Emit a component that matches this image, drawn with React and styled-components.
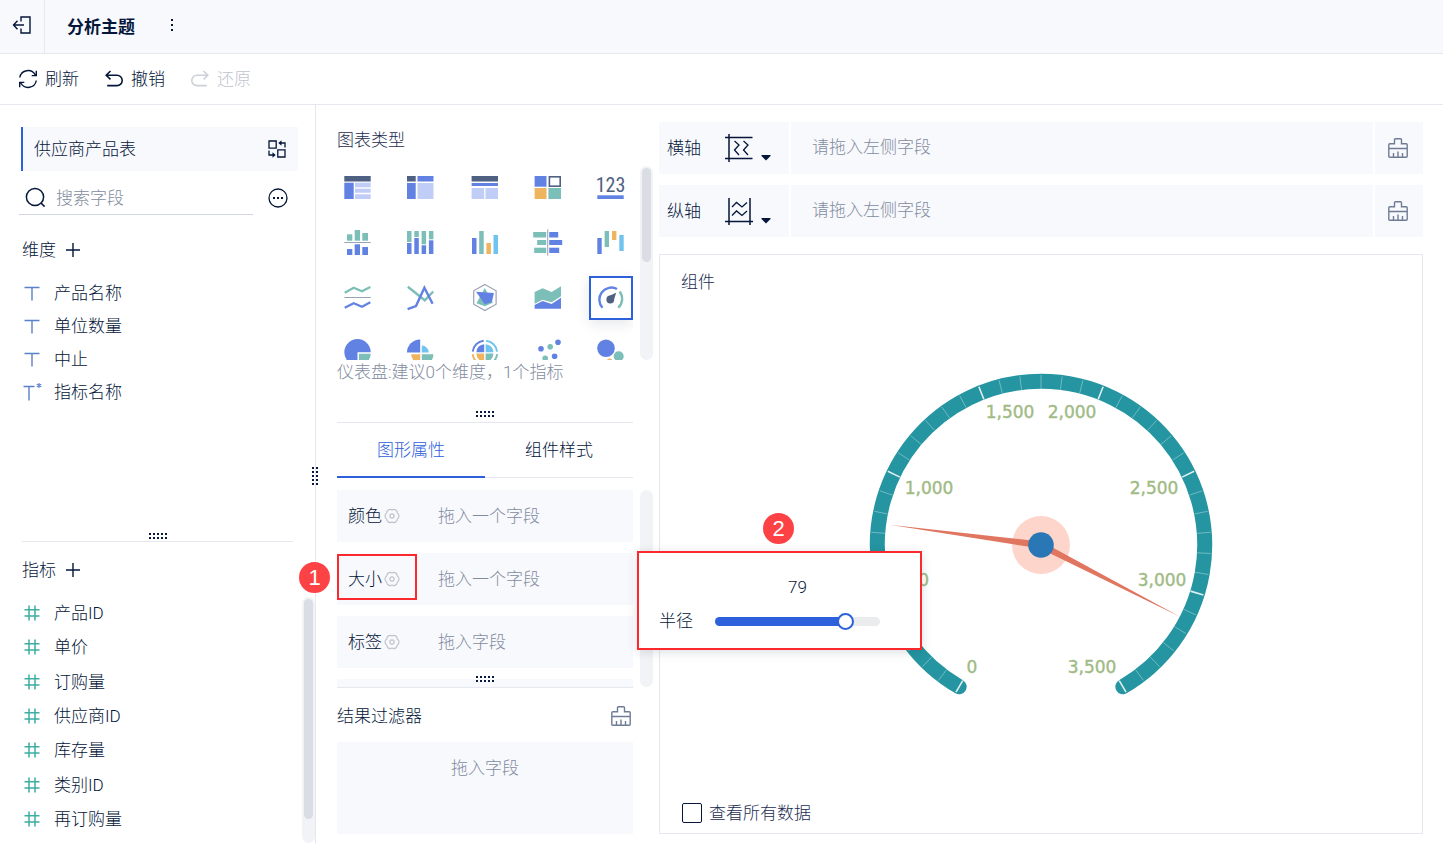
import React, { useState } from "react";
import styled, { createGlobalStyle, css } from "styled-components";

const c = {
  ink: "#04163a",
  soft: "#1c2c4f",
  muted: "#828c9f",
  faint: "#bfc4cd",
  line: "#e6e8f0",
  panel: "#f8f9fd",
  blue: "#2d60db",
  red: "#fb292d",
  teal: "#2495a1",
};

const chart = {
  dark: "#4f6182",
  blue: "#6282e3",
  pale: "#c0cdf6",
  green: "#7cbeb8",
  orange: "#eeb45e",
  sky: "#70c3ef",
  grey: "#9aa2b5",
};

const GlobalStyle = createGlobalStyle`
  *, *::before, *::after { box-sizing: border-box; }
  body { margin: 0; background: #fff; }
  body, button, input {
    font-family: Roboto, "Noto Sans CJK SC", sans-serif;
    font-size: 17px;
    font-weight: 300;
    line-height: 24px;
    color: ${c.ink};
  }
  button { padding: 0; border: 0; background: none; cursor: pointer; }
  svg { display: block; flex: none; }
`;

/* ---------- frame ---------- */

const Page = styled.div`
  display: flex;
  flex-direction: column;
  min-height: 100vh;
`;

const Header = styled.header`
  display: flex;
  align-items: center;
  height: 54px;
  background: ${c.panel};
  border-bottom: 1px solid ${c.line};
`;

const BackButton = styled.button`
  display: flex;
  align-items: center;
  justify-content: center;
  width: 45px;
  height: 53px;
  padding-bottom: 3px;
  border-right: 1px solid ${c.line};
`;

const Title = styled.h1`
  margin: 0 34px 0 22px;
  font-size: 17px;
  font-weight: 700;
`;

const MoreButton = styled.button`
  padding-bottom: 3px;
`;

const Toolbar = styled.div`
  display: flex;
  align-items: center;
  gap: 25px;
  height: 51px;
  padding-left: 18px;
  border-bottom: 1px solid ${c.line};
`;

const ToolButton = styled.button`
  display: flex;
  align-items: center;
  gap: 7px;
  color: ${c.ink};
  &:disabled { color: ${c.faint}; }
`;

const Body = styled.main`
  display: flex;
  flex: 1;
`;

/* ---------- shared parts ---------- */

const Handle = styled.span`
  position: absolute;
  ${(p) =>
    p.$vertical
      ? css`top: 362px; right: -3px; width: 6px; height: 18px;`
      : css`bottom: ${p.$low ? 2 : 5}px; left: 50%; margin-left: -9px; width: 18px; height: 6px;`}
  background: radial-gradient(circle at 1px 1px, ${c.ink} 0.7px, transparent 1.3px) 0 0 / 4px 4px;
`;

const ScrollTrack = styled.div`
  flex: none;
  width: 13px;
  padding: 2px;
  border-radius: 7px;
  background: #f2f3f6;
`;

const ScrollThumb = styled.div`
  height: ${(p) => p.$size};
  border-radius: 5px;
  background: #dadde3;
`;

const Badge = styled.span`
  position: absolute;
  display: flex;
  align-items: center;
  justify-content: center;
  width: 31px;
  height: 31px;
  border-radius: 50%;
  background: #fd4245;
  color: #fff;
  font-family: "Liberation Sans", sans-serif;
  font-size: 22px;
  font-weight: 400;
  z-index: 3;
`;

/* ---------- fields column ---------- */

const FieldsColumn = styled.aside`
  position: relative;
  display: flex;
  flex-direction: column;
  flex: 0 0 316px;
  padding-top: 22px;
  border-right: 1px solid ${c.line};
`;

const Dataset = styled.div`
  display: flex;
  align-items: center;
  justify-content: space-between;
  height: 44px;
  margin: 0 17px 0 21px;
  padding: 0 11px;
  background: ${c.panel};
  border-left: 2px solid ${c.blue};
`;

const SearchRow = styled.div`
  display: flex;
  align-items: center;
  gap: 15px;
  margin: 10px 27px 0 19px;
`;

const SearchBox = styled.label`
  display: flex;
  align-items: center;
  gap: 10px;
  flex: 1;
  height: 34px;
  padding-left: 6px;
  border-bottom: 1px solid #d3d7df;
  input {
    width: 100%;
    padding: 0;
    border: 0;
    outline: 0;
    background: none;
  }
  input::placeholder { color: ${c.muted}; opacity: 1; }
`;

const DimensionPane = styled.section`
  position: relative;
  flex: 1;
  margin: 23px 22px 0 22px;
  border-bottom: 1px solid ${c.line};
`;

const MetricPane = styled.section`
  display: flex;
  flex-direction: column;
  flex: 0 0 301px;
  padding-top: 16px;
`;

const PaneTitle = styled.h2`
  display: flex;
  align-items: center;
  gap: 10px;
  margin: 0;
  padding-left: ${(p) => (p.$inset ? "22px" : 0)};
  font-size: 17px;
  font-weight: 300;
`;

const FieldList = styled.ul`
  display: flex;
  flex-direction: column;
  flex: 1;
  margin: 0;
  padding: 0;
  list-style: none;
`;

const DimensionList = styled(FieldList)`
  margin-top: 15px;
`;

const MetricScroll = styled.div`
  display: flex;
  flex: 1;
  margin-top: 15px;
`;

const MetricList = styled(FieldList)`
  padding: 0 0 6px 22px;
`;

const Field = styled.li`
  display: flex;
  align-items: center;
  gap: 12px;
  flex: ${(p) => (p.$fill ? "1" : "0 0 33px")};
  padding-bottom: 2px;
`;

/* ---------- settings column ---------- */

const SettingsColumn = styled.section`
  display: flex;
  flex-direction: column;
  flex: 0 0 337px;
  padding: 0 0 9px 21px;
`;

const ChartTypes = styled.section`
  position: relative;
  flex: 0 0 318px;
  width: 296px;
  padding-top: 23px;
  border-bottom: 1px solid ${c.line};
`;

const Heading = styled.h2`
  margin: 0;
  font-size: 17px;
  font-weight: 300;
  color: ${(p) => (p.$soft ? c.soft : c.ink)};
`;

const TypeScroll = styled.div`
  display: flex;
  gap: 7px;
  width: 317px;
  height: 194px;
  margin: 14px 0 0 -1px;
`;

const TypeGrid = styled.div`
  display: grid;
  grid-template-columns: repeat(5, 44px);
  justify-content: space-between;
  row-gap: 11px;
  flex: 1;
  overflow: hidden;
`;

const TypeButton = styled.button`
  display: block;
  width: 44px;
  height: 44px;
  ${(p) =>
    p.$selected &&
    css`
      box-shadow: inset 0 0 0 2px ${c.blue}, 0 4px 14px rgba(20, 30, 60, 0.1);
    `}
`;

const Hint = styled.p`
  margin: 0;
  color: ${c.muted};
  white-space: nowrap;
`;

const Properties = styled.section`
  position: relative;
  display: flex;
  flex-direction: column;
  flex: 0 0 265px;
  width: 296px;
  border-bottom: 1px solid ${c.line};
`;

const Tabs = styled.div`
  display: flex;
  height: 55px;
  border-bottom: 1px solid ${c.line};
`;

const Tab = styled.button`
  flex: 1;
  height: 55px;
  color: ${(p) => (p.$active ? c.blue : c.ink)};
  border-bottom: 2px solid ${(p) => (p.$active ? c.blue : "transparent")};
`;

const PropScroll = styled.div`
  display: flex;
  gap: 7px;
  width: 316px;
  height: 197px;
  margin-top: 12px;
  overflow: hidden;
`;

const PropList = styled.div`
  display: flex;
  flex-direction: column;
  gap: 11px;
  flex: 1;
`;

const PropRow = styled.div`
  display: flex;
  align-items: center;
  flex: 0 0 52px;
  background: ${c.panel};
`;

const PropLabel = styled.div`
  display: flex;
  align-items: center;
  gap: 2px;
  width: 80px;
  height: 46px;
  margin-bottom: 4px;
  padding: 4px 0 0 9px;
  border: 2px solid ${(p) => (p.$marked ? c.red : "transparent")};
`;

const DropText = styled.span`
  color: ${c.muted};
  padding-left: ${(p) => p.$indent || 0}px;
`;

const Popup = styled.div`
  position: absolute;
  top: 128px;
  left: 300px;
  width: 285px;
  height: 99px;
  padding: 22px 40px 0 20px;
  background: #fff;
  border: 2px solid ${c.red};
  box-shadow: 0 2px 10px rgba(20, 30, 60, 0.14);
  z-index: 2;
`;

const SliderLine = styled.div`
  display: flex;
  align-items: center;
  gap: 22px;
  margin-top: 10px;
`;

const SliderValue = styled.output`
  display: block;
  margin-left: 56px;
  text-align: center;
`;

const SliderTrack = styled.div`
  position: relative;
  flex: 1;
  height: 9px;
  border-radius: 5px;
  background: #ebecee;
`;

const SliderFill = styled.div`
  height: 9px;
  border-radius: 5px;
  background: ${c.blue};
`;

const Range = styled.input`
  position: absolute;
  top: -4px;
  left: -8px;
  width: calc(100% + 16px);
  height: 17px;
  margin: 0;
  appearance: none;
  background: none;
  &::-webkit-slider-thumb {
    appearance: none;
    width: 17px;
    height: 17px;
    border: 2px solid ${c.blue};
    border-radius: 50%;
    background: #fff;
  }
`;

const MarkOne = styled(Badge)`
  top: 139px;
  left: -38px;
`;

const MarkTwo = styled(Badge)`
  top: 90px;
  left: 426px;
`;

const FilterHead = styled.div`
  display: flex;
  align-items: center;
  justify-content: space-between;
  width: 296px;
  height: 54px;
  padding-top: 2px;
`;

const ClearButton = styled.button`
  margin-right: 2px;
`;

const FilterDrop = styled.div`
  flex: 1;
  width: 296px;
  padding-top: 14px;
  background: ${c.panel};
  text-align: center;
`;

/* ---------- canvas column ---------- */

const CanvasColumn = styled.section`
  display: flex;
  flex-direction: column;
  flex: 1;
  min-width: 0;
  padding: 17px 20px 9px 6px;
`;

const AxisRow = styled.div`
  display: flex;
  gap: 2px;
  height: 52px;
  margin-bottom: 11px;
`;

const AxisLabel = styled.div`
  display: flex;
  align-items: center;
  flex: 0 0 130px;
  padding-left: 8px;
  background: ${c.panel};
`;

const AxisPicker = styled.button`
  display: flex;
  align-items: center;
  gap: 8px;
  margin-left: 24px;
`;

const AxisField = styled.div`
  display: flex;
  align-items: center;
  flex: 1;
  padding: 0 0 2px 21px;
  background: ${c.panel};
`;

const AxisClear = styled.button`
  display: flex;
  align-items: center;
  justify-content: center;
  flex: 0 0 48px;
  padding-right: 2px;
  background: ${c.panel};
`;

const Card = styled.section`
  display: flex;
  flex-direction: column;
  flex: 1;
  margin-top: 6px;
  padding: 15px 21px 8px;
  border: 1px solid ${c.line};
`;

const ChartArea = styled.div`
  display: flex;
  align-items: center;
  justify-content: center;
  flex: 1;
  padding-bottom: 6px;
`;

const GaugeLabel = styled.text`
  font-family: "DejaVu Sans", sans-serif;
  font-size: 17px;
  font-weight: 400;
  fill: #a0bb85;
  stroke: #a0bb85;
  stroke-width: 0.4px;
`;

const AllData = styled.label`
  display: flex;
  align-items: center;
  gap: 7px;
  padding-left: 1px;
  color: ${c.soft};
  input {
    appearance: none;
    width: 20px;
    height: 20px;
    margin: 0;
    border: 1px solid ${c.ink};
    border-radius: 2px;
    background: #fff;
  }
`;

/* ---------- line icons ---------- */

const Line = ({ w = 20, h = 20, sw = 1.4, color = c.ink, children }) => (
  <svg width={w} height={h} viewBox={`0 0 ${w} ${h}`} fill="none" stroke={color} strokeWidth={sw}>
    {children}
  </svg>
);

const BackIcon = () => (
  <Line>
    <path d="M9 6.5V2h9v16H9v-4.5M1.5 10H12M5.500 5.800 1.500 10l4 4.200" />
  </Line>
);

const MoreVertical = () => (
  <svg width="6" height="14" viewBox="0 0 6 14" fill={c.ink}>
    <path d="M2 1h2v2H2zM2 6h2v2H2zM2 11h2v2H2z" />
  </svg>
);

const RefreshIcon = () => (
  <Line>
    <path d="M1.800 8.500A8.300 8.300 0 0 1 17.300 6M18.300 11.500A8.300 8.300 0 0 1 2.800 14M18.300 1.800V6.600H13.700M1.700 18.200v-4.800h4.600" />
  </Line>
);

const UndoIcon = ({ flip, color }) => (
  <Line sw={1.6} color={color}>
    <path
      transform={flip ? "translate(20 0) scale(-1 1)" : undefined}
      d="M6.500 2 2.200 6.200l4.300 4.200M2.200 6.200H13a5.200 5.200 0 0 1 0 10.400H3.200"
    />
  </Line>
);

const SwapIcon = () => (
  <Line sw={1.3}>
    <path d="M2 2h7.200v7.200H2zM10.800 10.800H18V18h-7.200zM18 8.500V4h-4M2 11.500V16h4" />
    <path d="M11.300 4l3.200-2.700v5.400zM8.700 16l-3.200-2.700v5.400z" fill={c.ink} stroke="none" />
  </Line>
);

const SearchIcon = () => (
  <Line w={21} h={21} sw={1.5}>
    <circle cx="10" cy="10" r="8.600" />
    <path d="m16 16 3.600 3.600" />
  </Line>
);

const MoreCircle = () => (
  <Line sw={1.3}>
    <circle cx="10" cy="10" r="9" />
    <path d="M5 10h2M9 10h2M13 10h2" strokeWidth="1.800" />
  </Line>
);

const PlusIcon = () => (
  <Line w={14} h={14}>
    <path d="M7 0v14M0 7h14" />
  </Line>
);

const TextFieldIcon = ({ star }) => (
  <Line h={18} color="#5a80cc">
    <path d={star ? "M1.500 3.500h11M7 3.500v14" : "M2.500 3.500h15M10 3.500v13"} />
    {star && <path d="M17 0v5M14.800 1.200l4.400 2.600M14.800 3.800l4.400-2.600" strokeWidth="1.100" />}
  </Line>
);

const NumberFieldIcon = () => (
  <Line h={18} sw={1.5} color="#3fada2">
    <path d="M2.500 5.800h15M2.500 12h15M7 1.500v15M13 1.500v15" />
  </Line>
);

const GearIcon = () => (
  <Line w={16} h={16} sw={1.2} color={c.faint}>
    <path
      strokeLinejoin="round"
      d="M8 1.900A3.500 3.500 0 0 1 13.300 5A3.500 3.500 0 0 1 13.300 11A3.500 3.500 0 0 1 8 14.100A3.500 3.500 0 0 1 2.700 11A3.500 3.500 0 0 1 2.700 5A3.500 3.500 0 0 1 8 1.900z"
    />
    <circle cx="8" cy="8" r="2.100" />
  </Line>
);

const BrushIcon = () => (
  <Line color="#6f7c95">
    <path d="M.8 18.200V6.800q0-1 1-1h4.700V1.700q0-1 1-1h5q1 0 1 1v4.100h4.700q1 0 1 1v11.400q0 1-1 1H1.800q-1 0-1-1zM.8 10.500h18.400M5.500 19v-4M10 19v-5.500M14.500 19v-4" />
  </Line>
);

const AxisXIcon = () => (
  <Line w={28} h={30} sw={1.5}>
    <path d="M4 1v28M0 4.500h27.500M0 25.500h27.500" />
    <path d="m9.500 8 4.500 4-4.500 5 4.500 5M18.500 8l4.500 4-4.500 5 4.500 5" strokeWidth="1.300" />
  </Line>
);

const AxisYIcon = () => (
  <Line w={28} h={30} sw={1.5}>
    <path d="M4 2v27M25 2v27M0 25.500h28.500" />
    <path d="m7 11 4.500-4.500L17 11l5-4.500M7 19.500l4.500-4.500 5.500 4.500 5-4.500" strokeWidth="1.300" />
  </Line>
);

const Caret = () => (
  <svg width="10" height="30" viewBox="0 0 10 30" fill={c.ink}>
    <path d="M.5 22h9v1L5 27.500.5 23z" />
  </svg>
);

/* ---------- chart type icons, drawn on a 44 × 44 cell ---------- */

const Bars = ({ items }) =>
  items.map(([fill, x1, y1, x2, y2], i) => (
    <rect key={i} x={x1} y={y1} width={x2 - x1} height={y2 - y1} fill={chart[fill]} />
  ));

const typeIcons = [
  {
    name: "分组表",
    art: <Bars items={[["dark", 8.3, 10, 34.7, 15.5], ["blue", 8.3, 16.7, 17.7, 33], ["pale", 19, 16.7, 34.7, 21.3], ["pale", 19, 22.7, 34.7, 26.7], ["pale", 19, 28.3, 34.7, 33]]} />,
  },
  {
    name: "交叉表",
    art: <Bars items={[["dark", 8, 10, 16.7, 15.5], ["blue", 18.5, 10, 34.5, 15.5], ["blue", 8, 17, 16.7, 33], ["pale", 18.5, 17, 34.5, 33]]} />,
  },
  {
    name: "明细表",
    art: <Bars items={[["dark", 8.6, 10, 35, 15.5], ["blue", 8.6, 17, 35, 20], ["pale", 8.6, 22, 21.2, 33], ["pale", 22.5, 22, 35, 33]]} />,
  },
  {
    name: "颜色表格",
    art: (
      <>
        <Bars items={[["blue", 8.6, 10, 20.5, 20.7], ["orange", 8.6, 22, 20.5, 33], ["green", 22.4, 22, 35, 33]]} />
        <rect x="23.4" y="10.8" width="10.8" height="9.4" fill="none" stroke={chart.dark} strokeWidth="1.6" />
      </>
    ),
  },
  {
    name: "指标卡",
    art: (
      <>
        <text x="21.5" y="25.7" textAnchor="middle" fontFamily="'Liberation Sans Narrow', 'Roboto Condensed', sans-serif" fontSize="20" fontWeight="400" fill={chart.dark}>123</text>
        <Bars items={[["blue", 8.3, 29.3, 34.7, 33]]} />
      </>
    ),
  },
  {
    name: "对比柱状图",
    art: <Bars items={[["green", 11, 13.3, 16.3, 19.7], ["green", 18.7, 9, 24, 19.7], ["green", 26.3, 12, 32, 19.7], ["grey", 8.3, 21, 34.7, 22], ["blue", 11, 28, 16.3, 34], ["blue", 18.7, 23.3, 24, 34], ["blue", 26.3, 26, 32, 34]]} />,
  },
  {
    name: "堆积柱状图",
    art: <Bars items={[["green", 8, 10, 12.5, 21], ["green", 15.3, 10, 19.8, 16], ["green", 22.6, 10, 27.1, 23.3], ["green", 29.9, 10, 34.4, 18.3], ["blue", 8, 22, 12.5, 33], ["blue", 15.3, 17, 19.8, 33], ["blue", 22.6, 24.3, 27.1, 33], ["blue", 29.9, 19.3, 34.4, 33]]} />,
  },
  {
    name: "分区柱形图",
    art: <Bars items={[["blue", 9, 17, 13.5, 33], ["green", 16.2, 10, 20.7, 33], ["orange", 23.4, 22, 27.9, 33], ["sky", 30.5, 14, 35, 33]]} />,
  },
  {
    name: "对比条形图",
    art: <Bars items={[["green", 7.2, 11, 20.2, 16.5], ["green", 11.2, 19, 20.2, 24], ["green", 8.2, 26.7, 20.2, 32], ["grey", 21.2, 8.3, 22.2, 34.7], ["blue", 23.2, 11, 32.2, 16.5], ["blue", 23.2, 19, 36.2, 24], ["blue", 23.2, 26.7, 33.2, 32]]} />,
  },
  {
    name: "瀑布图",
    art: <Bars items={[["blue", 8.3, 17, 12.7, 33], ["green", 15.6, 10, 20, 26], ["orange", 23, 10, 27.4, 19], ["sky", 30.3, 14, 34.7, 30]]} />,
  },
  {
    name: "折线图",
    art: (
      <g fill="none" strokeWidth="2.2">
        <path d="m8.700 16.700 9-5 8.300 3.600 8.300-4.300" stroke={chart.green} />
        <path d="M8.300 21.500h26.400" stroke={chart.grey} strokeWidth="1" />
        <path d="m8.700 31.700 9-4.400 8.300 3.400 8.300-4.400" stroke={chart.blue} />
      </g>
    ),
  },
  {
    name: "范围面积图",
    art: (
      <g fill="none" strokeWidth="2.4">
        <path d="m8.800 10.800 17 13.500 8.400-8.800" stroke={chart.green} />
        <path d="m8.600 33.200 8.400-3.200 8.400-18.300 8.200 16" stroke={chart.blue} />
      </g>
    ),
  },
  {
    name: "雷达图",
    art: (
      <>
        <path d="m21.900 8.500 11.200 6.300v13.400l-11.200 6.300-11.200-6.300V14.800z" fill="none" stroke={chart.grey} strokeWidth="1.2" />
        <path d="m21.800 12 8 14.700-8 3.600-8.300-3z" fill={chart.green} />
        <path d="m13 15.700 17.900 1.200-2 9-7.100 2.300z" fill={chart.blue} />
      </>
    ),
  },
  {
    name: "面积图",
    art: (
      <>
        <path d="m8.600 16 8-3.700 9 3.700L35 10.300v10l-9.400 6-9-2.600-8 4z" fill={chart.green} />
        <path d="m8.600 29 8-4 9 3 9.400-6.300v11H8.600z" fill={chart.blue} />
      </>
    ),
  },
  {
    name: "仪表盘",
    selected: true,
    art: (
      <>
        <g fill="none" strokeWidth="2.4">
          <path d="M13.500 31.700A12 12 0 0 1 28 13" stroke={chart.blue} />
          <path d="M30.600 15.400a12 12 0 0 1-1.400 16.300" stroke={chart.green} />
        </g>
        <circle cx="21.3" cy="23.500" r="3.900" fill={chart.dark} />
        <path d="m19.500 20.300 7.700-3.600-2.600 8z" fill={chart.dark} />
      </>
    ),
  },
  {
    name: "饼图",
    art: (
      <>
        <path d="M21.500 21.300v13.200A13.200 13.200 0 1 1 34.700 21.300z" fill={chart.blue} />
        <path d="M23 22.800h11.700A12 12 0 0 1 23 34.500z" fill={chart.green} />
      </>
    ),
  },
  {
    name: "玫瑰图",
    art: (
      <>
        <path d="M21.200 21.600H8A13 13 0 0 1 21.200 8.400z" fill={chart.blue} />
        <path d="M22.800 21.600v-7a7 7 0 0 1 7 7z" fill={chart.sky} />
        <path d="M21.200 23.300h-9a9 9 0 0 0 9 9z" fill={chart.orange} />
        <path d="M22.800 23.300h11.600a11.600 11.600 0 0 1-11.600 11.600z" fill={chart.green} />
      </>
    ),
  },
  {
    name: "多层饼图",
    art: (
      <>
        <path d="M21.200 21.200h-7.800a8 8 0 0 1 7.800-8z" fill={chart.blue} />
        <path d="M22.600 21.200v-8a8 8 0 0 1 7.800 8z" fill={chart.sky} />
        <path d="M21.200 22.600h-7.800a8 8 0 0 0 7.800 8z" fill={chart.orange} />
        <path d="M22.600 22.600v8a8 8 0 0 0 7.800-8z" fill={chart.green} />
        <g fill="none" strokeWidth="1.9">
          <path d="M9.700 20.700A12.200 12.200 0 0 1 20.700 9.700" stroke={chart.blue} />
          <path d="M23.100 9.700a12.200 12.200 0 0 1 11 11" stroke={chart.sky} />
          <path d="M9.700 23.100a12.200 12.200 0 0 0 11 11" stroke={chart.orange} />
          <path d="M23.100 34.100a12.200 12.200 0 0 0 11-11" stroke={chart.green} />
        </g>
      </>
    ),
  },
  {
    name: "散点图",
    art: (
      <>
        <g fill={chart.blue}>
          <circle cx="15" cy="17.700" r="2.800" />
          <circle cx="32" cy="11.300" r="2.800" />
          <circle cx="28.600" cy="25.300" r="2.800" />
        </g>
        <g fill={chart.green}>
          <circle cx="24.200" cy="15.800" r="2.800" />
          <circle cx="19.200" cy="27.300" r="2.800" />
        </g>
      </>
    ),
  },
  {
    name: "气泡图",
    art: (
      <>
        <circle cx="17" cy="17.200" r="8.800" fill={chart.blue} />
        <circle cx="29.700" cy="25.200" r="5" fill={chart.green} />
        <circle cx="20.700" cy="30.500" r="3" fill={chart.orange} />
      </>
    ),
  },
];

/* ---------- gauge ---------- */

const polar = (angle, r) => {
  const a = (angle * Math.PI) / 180;
  return [180 + r * Math.sin(a), 180 - r * Math.cos(a)];
};

const gaugeLabels = [
  ["0", 111, 308, "middle"],
  ["500", 68, 221, "end"],
  ["1,000", 68, 129, "middle"],
  ["1,500", 149, 53, "middle"],
  ["2,000", 211, 53, "middle"],
  ["2,500", 293, 129, "middle"],
  ["3,000", 301, 221, "middle"],
  ["3,500", 231, 308, "middle"],
];

function Gauge() {
  const [sx, sy] = polar(-150, 163.7);
  const [ex, ey] = polar(150, 163.7);
  const ticks = Array.from({ length: 43 }, (_, i) => {
    const angle = -150 + (i * 300) / 42;
    const major = i % 6 === 0;
    const [x1, y1] = polar(angle, 156.5);
    const [x2, y2] = polar(angle, 170);
    return <line key={i} x1={x1} y1={y1} x2={x2} y2={y2} strokeWidth={major ? 1.6 : 1} opacity={major ? 0.85 : 0.35} />;
  });
  return (
    <svg width="360" height="360" viewBox="0 0 360 360" role="img" aria-label="仪表盘">
      <path d={`M${sx} ${sy}A163.7 163.7 0 1 1 ${ex} ${ey}`} fill="none" stroke={c.teal} strokeWidth="15" strokeLinecap="round" />
      <g stroke="#fff">{ticks}</g>
      <circle cx="180" cy="180" r="29" fill="#fed5cb" />
      <path d="M28.500 159.700 180.500 176.500l-1 7z" fill="#e07560" />
      <path d="m319.500 252-141-68.700 3-6.300z" fill="#e07560" />
      <circle cx="180" cy="180" r="12.800" fill="#2a77b6" />
      {gaugeLabels.map(([t, x, y, anchor]) => (
        <GaugeLabel key={t} x={x} y={y} textAnchor={anchor}>{t}</GaugeLabel>
      ))}
    </svg>
  );
}

/* ---------- page ---------- */

const dimensions = ["产品名称", "单位数量", "中止", "指标名称"];
const metrics = ["产品ID", "单价", "订购量", "供应商ID", "库存量", "类别ID", "再订购量"];
const hint = "仪表盘:建议0个维度\uff0c1个指标";
const properties = [
  ["颜色", "拖入一个字段"],
  ["大小", "拖入一个字段"],
  ["标签", "拖入字段"],
];
const axes = [
  ["横轴", AxisXIcon],
  ["纵轴", AxisYIcon],
];

export default function App() {
  const [radius, setRadius] = useState(79);
  return (
    <Page lang="zh-CN">
      <GlobalStyle />
      <Header>
        <BackButton aria-label="返回"><BackIcon /></BackButton>
        <Title>分析主题</Title>
        <MoreButton aria-label="更多"><MoreVertical /></MoreButton>
      </Header>
      <Toolbar>
        <ToolButton><RefreshIcon />刷新</ToolButton>
        <ToolButton><UndoIcon />撤销</ToolButton>
        <ToolButton disabled><UndoIcon flip color="#ccd0d8" />还原</ToolButton>
      </Toolbar>
      <Body>
        <FieldsColumn>
          <Dataset>
            供应商产品表
            <button aria-label="切换数据表"><SwapIcon /></button>
          </Dataset>
          <SearchRow>
            <SearchBox>
              <SearchIcon />
              <input type="text" placeholder="搜索字段" aria-label="搜索字段" />
            </SearchBox>
            <button aria-label="更多操作"><MoreCircle /></button>
          </SearchRow>
          <DimensionPane>
            <PaneTitle>维度<button aria-label="添加维度"><PlusIcon /></button></PaneTitle>
            <DimensionList>
              {dimensions.map((name, i) => (
                <Field key={name}><TextFieldIcon star={i === 3} />{name}</Field>
              ))}
            </DimensionList>
            <Handle $low />
          </DimensionPane>
          <MetricPane>
            <PaneTitle $inset>指标<button aria-label="添加指标"><PlusIcon /></button></PaneTitle>
            <MetricScroll>
              <MetricList>
                {metrics.map((name) => (
                  <Field key={name} $fill><NumberFieldIcon />{name}</Field>
                ))}
              </MetricList>
              <ScrollTrack><ScrollThumb $size="91%" /></ScrollTrack>
            </MetricScroll>
          </MetricPane>
          <Handle $vertical />
        </FieldsColumn>

        <SettingsColumn>
          <ChartTypes>
            <Heading $soft>图表类型</Heading>
            <TypeScroll>
              <TypeGrid>
                {typeIcons.map(({ name, art, selected }) => (
                  <TypeButton key={name} aria-label={name} aria-pressed={!!selected} $selected={selected}>
                    <svg width="44" height="44" viewBox="0 0 44 44">{art}</svg>
                  </TypeButton>
                ))}
              </TypeGrid>
              <ScrollTrack><ScrollThumb $size="94px" /></ScrollTrack>
            </TypeScroll>
            <Hint>{hint}</Hint>
            <Handle />
          </ChartTypes>

          <Properties>
            <Tabs role="tablist">
              <Tab role="tab" aria-selected="true" $active>图形属性</Tab>
              <Tab role="tab" aria-selected="false">组件样式</Tab>
            </Tabs>
            <PropScroll>
              <PropList>
                {properties.map(([label, text]) => (
                  <PropRow key={label}>
                    <PropLabel $marked={label === "大小"}>
                      {label}
                      <button aria-label={`${label}设置`}><GearIcon /></button>
                    </PropLabel>
                    <DropText $indent={21}>{text}</DropText>
                  </PropRow>
                ))}
                <PropRow />
              </PropList>
              <ScrollTrack />
            </PropScroll>
            <Handle />
            <MarkOne>1</MarkOne>
            <MarkTwo>2</MarkTwo>
            <Popup>
              <SliderValue htmlFor="radius">{radius}</SliderValue>
              <SliderLine>
                <label htmlFor="radius">半径</label>
                <SliderTrack>
                  <SliderFill style={{ width: `${radius}%` }} />
                  <Range id="radius" type="range" min="0" max="100" value={radius} onChange={(e) => setRadius(Number(e.target.value))} />
                </SliderTrack>
              </SliderLine>
            </Popup>
          </Properties>

          <FilterHead>
            <Heading>结果过滤器</Heading>
            <ClearButton aria-label="清空过滤器"><BrushIcon /></ClearButton>
          </FilterHead>
          <FilterDrop><DropText>拖入字段</DropText></FilterDrop>
        </SettingsColumn>

        <CanvasColumn>
          {axes.map(([label, Icon]) => (
            <AxisRow key={label}>
              <AxisLabel>
                {label}
                <AxisPicker aria-label={`${label}类型`}><Icon /><Caret /></AxisPicker>
              </AxisLabel>
              <AxisField><DropText>请拖入左侧字段</DropText></AxisField>
              <AxisClear aria-label={`清空${label}`}><BrushIcon /></AxisClear>
            </AxisRow>
          ))}
          <Card>
            <Heading $soft>组件</Heading>
            <ChartArea><Gauge /></ChartArea>
            <AllData><input type="checkbox" />查看所有数据</AllData>
          </Card>
        </CanvasColumn>
      </Body>
    </Page>
  );
}
